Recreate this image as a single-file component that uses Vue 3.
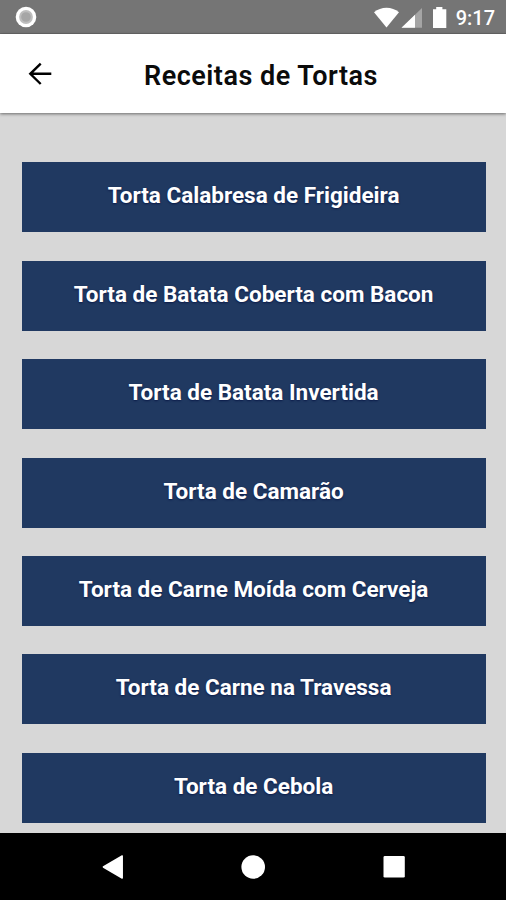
<script setup>
const recipes = [
  'Torta Calabresa de Frigideira',
  'Torta de Batata Coberta com Bacon',
  'Torta de Batata Invertida',
  'Torta de Camarão',
  'Torta de Carne Moída com Cerveja',
  'Torta de Carne na Travessa',
  'Torta de Cebola',
]
</script>

<template>
  <div class="screen">
    <div class="status">
      <svg class="record" width="22" height="22" viewBox="0 0 22 22">
        <circle cx="11" cy="11" r="10.3" fill="#fff" />
        <circle cx="11" cy="11" r="6.9" fill="#bdbdbd" />
        <circle cx="11" cy="11" r="4.8" fill="#a6a6a6" />
      </svg>
      <div class="indicators">
        <svg width="74" height="24" viewBox="0 0 74 24">
          <path d="M0 7.2C7 1.1 18 1.1 25 7.2L12.5 22.5Z" fill="#fff" />
          <path d="M48 3V22.7H27.5Z" fill="#a5a5a5" />
          <path d="M41 9.8V22.7H27.5Z" fill="#fff" />
          <path d="M59 4.3h3.2V2h6.2v2.3H72.3V23H59Z" fill="#fff" />
        </svg>
        <span class="clock">9:17</span>
      </div>
    </div>
    <header class="header">
      <button class="back" aria-label="Voltar">
        <svg width="24" height="24" viewBox="0 0 24 24" fill="none" stroke="#000" stroke-width="2.4">
          <path d="M23.3 11.8H2M12.7 1.6L2.3 11.8L12.7 22" />
        </svg>
      </button>
      <h1>Receitas de Tortas</h1>
    </header>
    <main class="list">
      <button v-for="recipe in recipes" :key="recipe" class="item">{{ recipe }}</button>
    </main>
    <nav class="navbar">
      <svg width="24" height="26" viewBox="0 0 24 26">
        <path d="M3.4 13L22.2 2V24Z" fill="#fff" stroke="#fff" stroke-width="1.5" stroke-linejoin="round" />
      </svg>
      <svg width="24" height="24" viewBox="0 0 24 24"><circle cx="12.2" cy="12" r="11.8" fill="#fff" /></svg>
      <svg width="24" height="24" viewBox="0 0 24 24"><rect x="1.5" y="1.1" width="21.3" height="21.4" rx="1.3" fill="#fff" /></svg>
    </nav>
  </div>
</template>

<style>
body {
  margin: 0;
}
</style>

<style scoped>
.screen {
  width: 506px;
  height: 900px;
  display: flex;
  flex-direction: column;
  overflow: hidden;
  background: #d7d7d7;
  font-family: Roboto, sans-serif;
}
.status {
  flex: none;
  box-sizing: border-box;
  height: 34px;
  padding: 0 11px 0 15px;
  display: flex;
  align-items: center;
  justify-content: space-between;
  background: #757575;
  border-bottom: 1px solid #696969;
}
.indicators {
  display: flex;
  align-items: center;
  gap: 8px;
}
.indicators svg {
  margin-top: 1px;
}
.clock {
  color: #fff;
  font-size: 20px;
  font-weight: 500;
  line-height: 24px;
  margin-top: 3px;
}
.header {
  flex: none;
  height: 79px;
  display: grid;
  grid-template-columns: 80px 1fr 64px;
  align-items: center;
  background: #fff;
  box-shadow: 0 1px 3px rgba(0, 0, 0, 0.5);
}
.back {
  display: flex;
  padding: 0 0 0 28px;
  border: 0;
  background: none;
}
h1 {
  margin: 4px 0 0;
  text-align: center;
  font-size: 27px;
  font-weight: 600;
  letter-spacing: 0.5px;
  line-height: 32px;
  color: #0b0b0b;
}
.list {
  flex: 1;
  min-height: 0;
  padding: 49.2px 20.5px 0 21.7px;
  display: flex;
  flex-direction: column;
  gap: 28.45px;
}
.item {
  flex: none;
  height: 70px;
  padding: 0 0 4px;
  border: 0;
  background: #203961;
  color: #fff;
  font-family: inherit;
  font-size: 22.5px;
  font-weight: 700;
  text-align: center;
  text-shadow: 0 1px 2px #0a1a48;
}
.navbar {
  flex: none;
  height: 67px;
  display: flex;
  align-items: center;
  justify-content: center;
  gap: 117px;
  background: #000;
}
</style>
